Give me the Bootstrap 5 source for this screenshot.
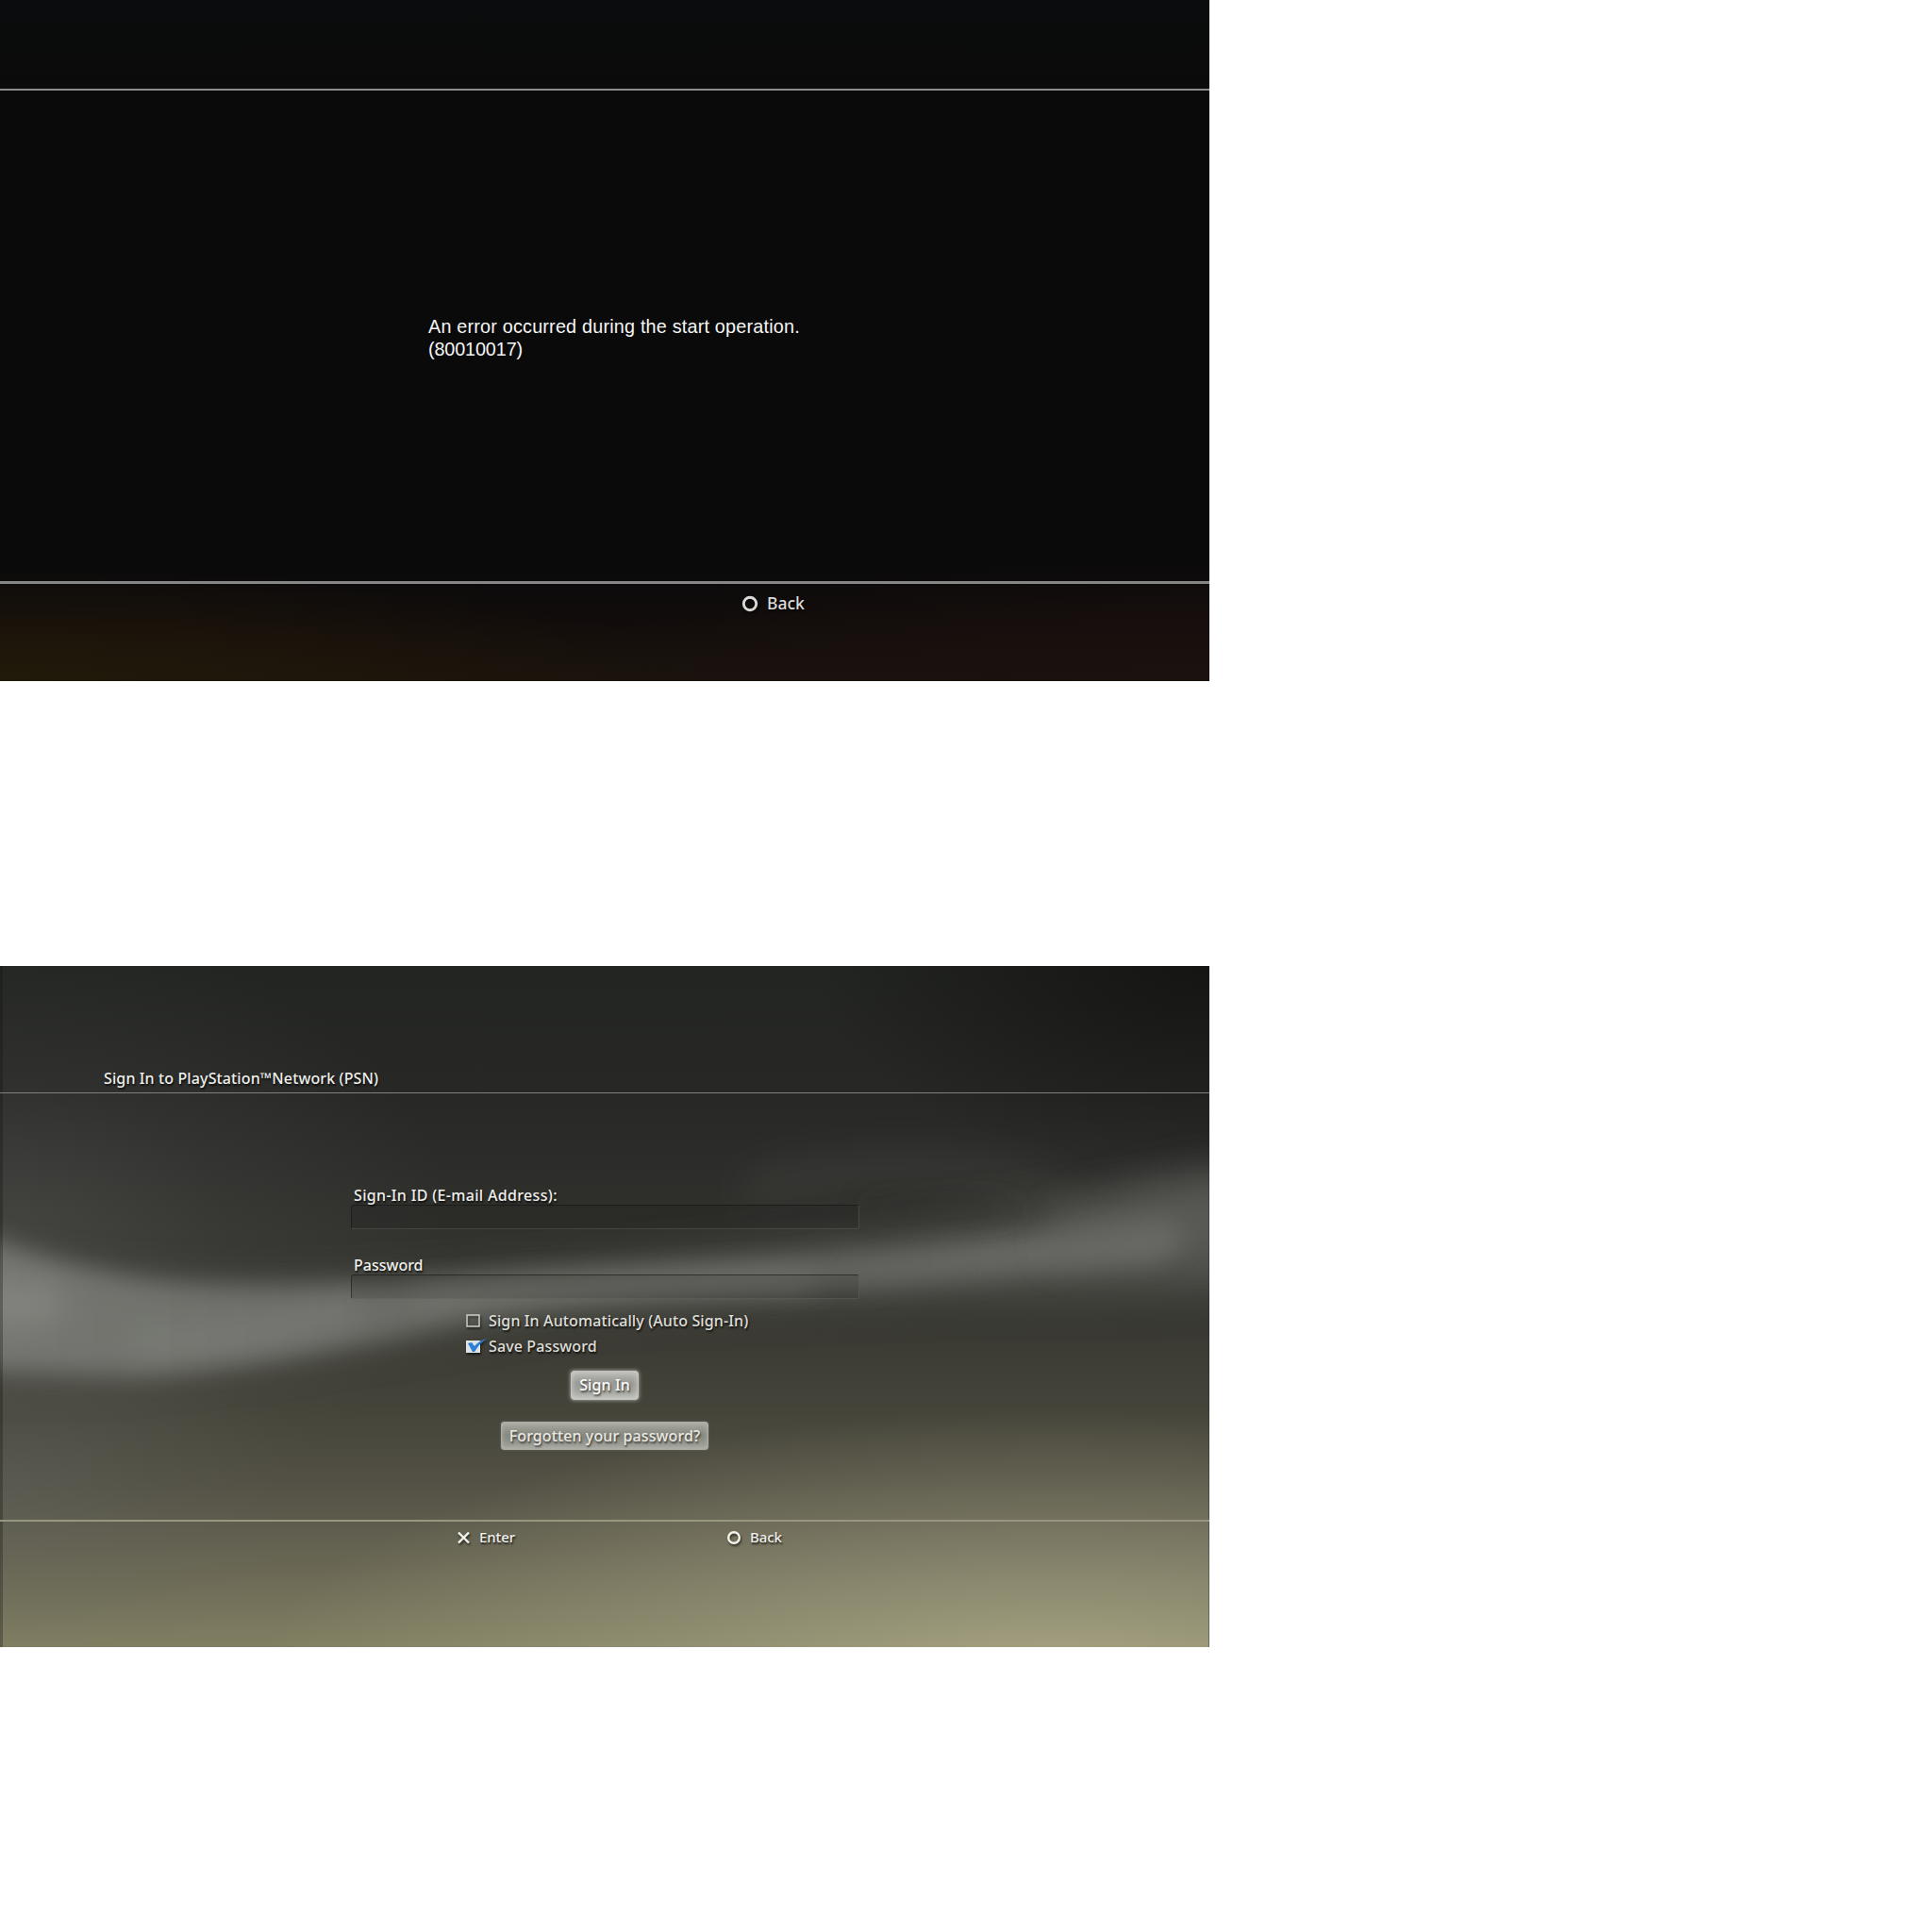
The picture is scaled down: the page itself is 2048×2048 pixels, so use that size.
<!DOCTYPE html>
<html lang="en">
<head>
<meta charset="utf-8">
<meta name="viewport" content="width=device-width, initial-scale=1">
<title>Console screens</title>
<link href="https://cdn.jsdelivr.net/npm/bootstrap@5.3.0/dist/css/bootstrap.min.css" rel="stylesheet">
<style>
body{background:#fff;font-family:"Noto Sans",sans-serif;font-weight:500;color:#efefeb}
.screen{width:1282px;height:722px;overflow:hidden;line-height:1}
.screen+.screen{margin-top:302px}
.shade{text-shadow:1px 2px 2px rgba(0,0,0,.75)}
.err-screen{background:radial-gradient(ellipse 750px 120px at 0 100%,#211909 0,transparent 100%),radial-gradient(ellipse 700px 130px at 100% 100%,#1b110e 0,transparent 100%),linear-gradient(#0b0c0d 0,#0a0a0a 15%,#0a0a0a 75%,#0b0a0b 84%,#110c0b 91%,#1a130d 100%)}
.err-head{height:96px;border-bottom:2px solid #8c8c8c}
.err-main{height:520px;padding:238px 0 0 454px;font:400 19.8px/24px "Liberation Sans",sans-serif;letter-spacing:.2px;color:#f5f5f5}
.err-code{letter-spacing:-.12px}
.err-foot{border-top:3px solid #868686;height:106px;padding:12px 0 0 786px;gap:9px;font-size:17.5px;color:#dcdcdc}
.sky{inset:0;z-index:0}
.layer{z-index:1}
.in-head{height:135px;border-bottom:1px solid #80807e;padding:111px 0 0 110px;letter-spacing:.12px}
.in-main{height:452px;padding:100px 0 0 372px}
.f-label{height:18px;padding-left:3px;font-size:16px;line-height:16px}
.wide-text{letter-spacing:.33px}
.f-input{width:539px;height:26px;border-radius:3px;background:rgba(0,0,0,.1);border:1px solid rgba(110,110,104,.4);border-top-color:rgba(15,15,15,.55);border-left-color:rgba(15,15,15,.5);padding:0}
.f-gap{margin-top:30px}
.check-row{height:27px;gap:7px;margin-left:122px;font-size:16px;letter-spacing:.12px;color:#deded9}
.first-check{margin-top:9px}
.key-btn{font-weight:500;color:#fafaf8;border:1px solid #c2c2bd;border-radius:3px;padding:0 0 1px;line-height:1;letter-spacing:.1px;text-shadow:1px 2px 2px rgba(40,40,40,.8)}
.b-one{width:72px;height:31px;margin:13px 0 0 233px;background:linear-gradient(#b9b9b6,#999995 42%,#a0a09b 65%,#bcbcb8);box-shadow:0 0 4px #b9b9b4,inset 0 0 6px #d0d0cb}
.b-two{width:220px;height:30px;margin:23px 0 0 159px;color:#e9e9e2;background:linear-gradient(#a9aaa1,#888a80 45%,#8c8d83 62%,#a8a9a0);border-color:#aaaba2;box-shadow:0 0 2px #77786e,inset 0 0 5px #b3b4ab}
.in-foot{border-top:2px solid #98967f;padding:9px 0 0 484px;font-size:15px;letter-spacing:-.1px}
.w-enter{width:286px}
.pad-key{gap:9px}
.glyph{filter:drop-shadow(1px 2px 1px rgba(0,0,0,.6));overflow:visible;flex:none}
</style>
</head>
<body>
<section class="screen err-screen">
  <header class="err-head"></header>
  <main class="err-main"><div>An error occurred during the start operation.</div><div class="err-code">(80010017)</div></main>
  <footer class="err-foot d-flex align-items-start shade"><svg class="glyph" width="18" height="18"><circle cx="9" cy="9" r="6.7" fill="none" stroke="#d9d9d9" stroke-width="2.9"/></svg><span>Back</span></footer>
</section>
<section class="screen position-relative">
  <svg class="sky position-absolute" width="1282" height="722" viewBox="0 0 1282 722">
    <defs>
      <linearGradient id="base" x1="0" y1="0" x2="0" y2="1"><stop offset="0" stop-color="#232523"/><stop offset=".18" stop-color="#272826"/><stop offset=".35" stop-color="#2f2f2c"/><stop offset=".52" stop-color="#383832"/><stop offset=".64" stop-color="#444339"/><stop offset=".76" stop-color="#535145"/><stop offset=".85" stop-color="#636150"/><stop offset="1" stop-color="#817f62"/></linearGradient>
      <radialGradient id="corner"><stop offset="0" stop-color="#10100e" stop-opacity=".75"/><stop offset="1" stop-color="#10100e" stop-opacity="0"/></radialGradient>
      <radialGradient id="glow"><stop offset="0" stop-color="#b8b692" stop-opacity=".8"/><stop offset=".5" stop-color="#b0ae8e" stop-opacity=".4"/><stop offset="1" stop-color="#b4b38c" stop-opacity="0"/></radialGradient>
      <radialGradient id="haze"><stop offset="0" stop-color="#666763" stop-opacity=".6"/><stop offset=".5" stop-color="#666763" stop-opacity=".22"/><stop offset="1" stop-color="#666763" stop-opacity="0"/></radialGradient>
      <linearGradient id="band" gradientUnits="userSpaceOnUse" x1="0" y1="0" x2="1282" y2="0"><stop offset="0" stop-color="#7e7f7a"/><stop offset=".25" stop-color="#767772"/><stop offset=".45" stop-color="#6d6e68"/><stop offset=".75" stop-color="#6b6c67"/><stop offset=".95" stop-color="#70716c"/></linearGradient>
      <filter id="s8" filterUnits="userSpaceOnUse" x="-100" y="-100" width="1500" height="900"><feGaussianBlur stdDeviation="12"/></filter>
      <filter id="s14" filterUnits="userSpaceOnUse" x="-100" y="-100" width="1500" height="900"><feGaussianBlur stdDeviation="16"/></filter>
      <filter id="s20" filterUnits="userSpaceOnUse" x="-100" y="-100" width="1500" height="900"><feGaussianBlur stdDeviation="22"/></filter>
    </defs>
    <rect width="1282" height="722" fill="url(#base)"/>
    <ellipse cx="1282" cy="0" rx="420" ry="220" fill="url(#corner)"/>
    <ellipse cx="0" cy="280" rx="480" ry="320" fill="url(#haze)" opacity=".62"/>
    <ellipse cx="0" cy="560" rx="320" ry="190" fill="url(#haze)" opacity=".6"/>
    <ellipse cx="1120" cy="760" rx="850" ry="290" fill="url(#glow)" opacity=".85"/>
    <path d="M-40 300 Q120 345 300 340 T700 312 T1000 270 L1330 225 V345 L1000 350 L600 365 L300 415 L120 435 H-40Z" fill="#656661" opacity=".55" filter="url(#s20)"/>
    <path d="M-60 270 Q70 325 180 336 T560 328 Q800 318 980 298 L1235 268 Q1280 290 1225 314 L950 338 Q650 350 500 374 Q300 423 150 434 L-60 424Z" fill="url(#band)" opacity=".8" filter="url(#s8)"/>
    <path d="M440 352 Q640 330 860 335" fill="none" stroke="#84857f" stroke-width="18" opacity=".5" filter="url(#s14)"/>
    <path d="M140 400 Q280 398 380 362" fill="none" stroke="#8c8d88" stroke-width="24" opacity=".35" filter="url(#s14)"/>
    <ellipse cx="20" cy="358" rx="50" ry="22" fill="#999a94" opacity=".4" filter="url(#s14)"/>
    <path d="M790 238 Q900 208 1040 222 Q1110 236 1150 270" fill="none" stroke="#5e5e5a" stroke-width="26" opacity=".32" filter="url(#s20)"/>
    <path d="M1120 272 Q1200 220 1330 215 V305 L1120 310Z" fill="#666763" opacity=".5" filter="url(#s20)"/>
    <ellipse cx="1000" cy="258" rx="90" ry="10" fill="#292926" opacity=".4" filter="url(#s14)"/>
    <rect width="3" height="722" fill="#111" opacity=".3"/><rect x="1281" width="1" height="722" fill="#222" opacity=".4"/>
  </svg>
  <div class="layer position-relative">
    <header class="in-head shade">Sign In to PlayStation™Network (PSN)</header>
    <main class="in-main shade">
      <div class="f-label wide-text">Sign-In ID (E-mail Address):</div>
      <input class="f-input d-block" type="text" aria-label="Sign-In ID">
      <div class="f-label f-gap">Password</div>
      <input class="f-input d-block" type="password" aria-label="Password">
      <div class="check-row first-check d-flex align-items-center"><svg class="glyph" width="17" height="16"><rect x="1" y="2" width="13" height="12" fill="#77776f" fill-opacity=".2" stroke="#c6c6bd" stroke-width="1.6"/></svg><span>Sign In Automatically (Auto Sign-In)</span></div>
      <div class="check-row d-flex align-items-center"><svg class="glyph" width="17" height="16"><rect x="0" y="2" width="15" height="13" fill="#dfe3e4"/><path d="M2 5 L6 4 L9 8 Q15 1 22 0 Q14 5 9 14 H7Z" fill="#2c7fd6"/></svg><span>Save Password</span></div>
      <button class="btn key-btn b-one d-block">Sign In</button>
      <button class="btn key-btn b-two d-block">Forgotten your password?</button>
    </main>
    <footer class="in-foot d-flex align-items-start shade">
      <div class="w-enter pad-key d-flex"><svg class="glyph" width="15" height="16"><path d="M2 2.5 L13 13.5 M13 2.5 L2 13.5" stroke="#f4f4ec" stroke-width="2.4"/></svg><span>Enter</span></div>
      <div class="pad-key d-flex"><svg class="glyph" width="16" height="16"><circle cx="8" cy="8" r="5.8" fill="none" stroke="#f4f4ec" stroke-width="2.4"/></svg><span>Back</span></div>
    </footer>
  </div>
</section>
<script src="https://cdn.jsdelivr.net/npm/bootstrap@5.3.0/dist/js/bootstrap.bundle.min.js"></script>
</body>
</html>
